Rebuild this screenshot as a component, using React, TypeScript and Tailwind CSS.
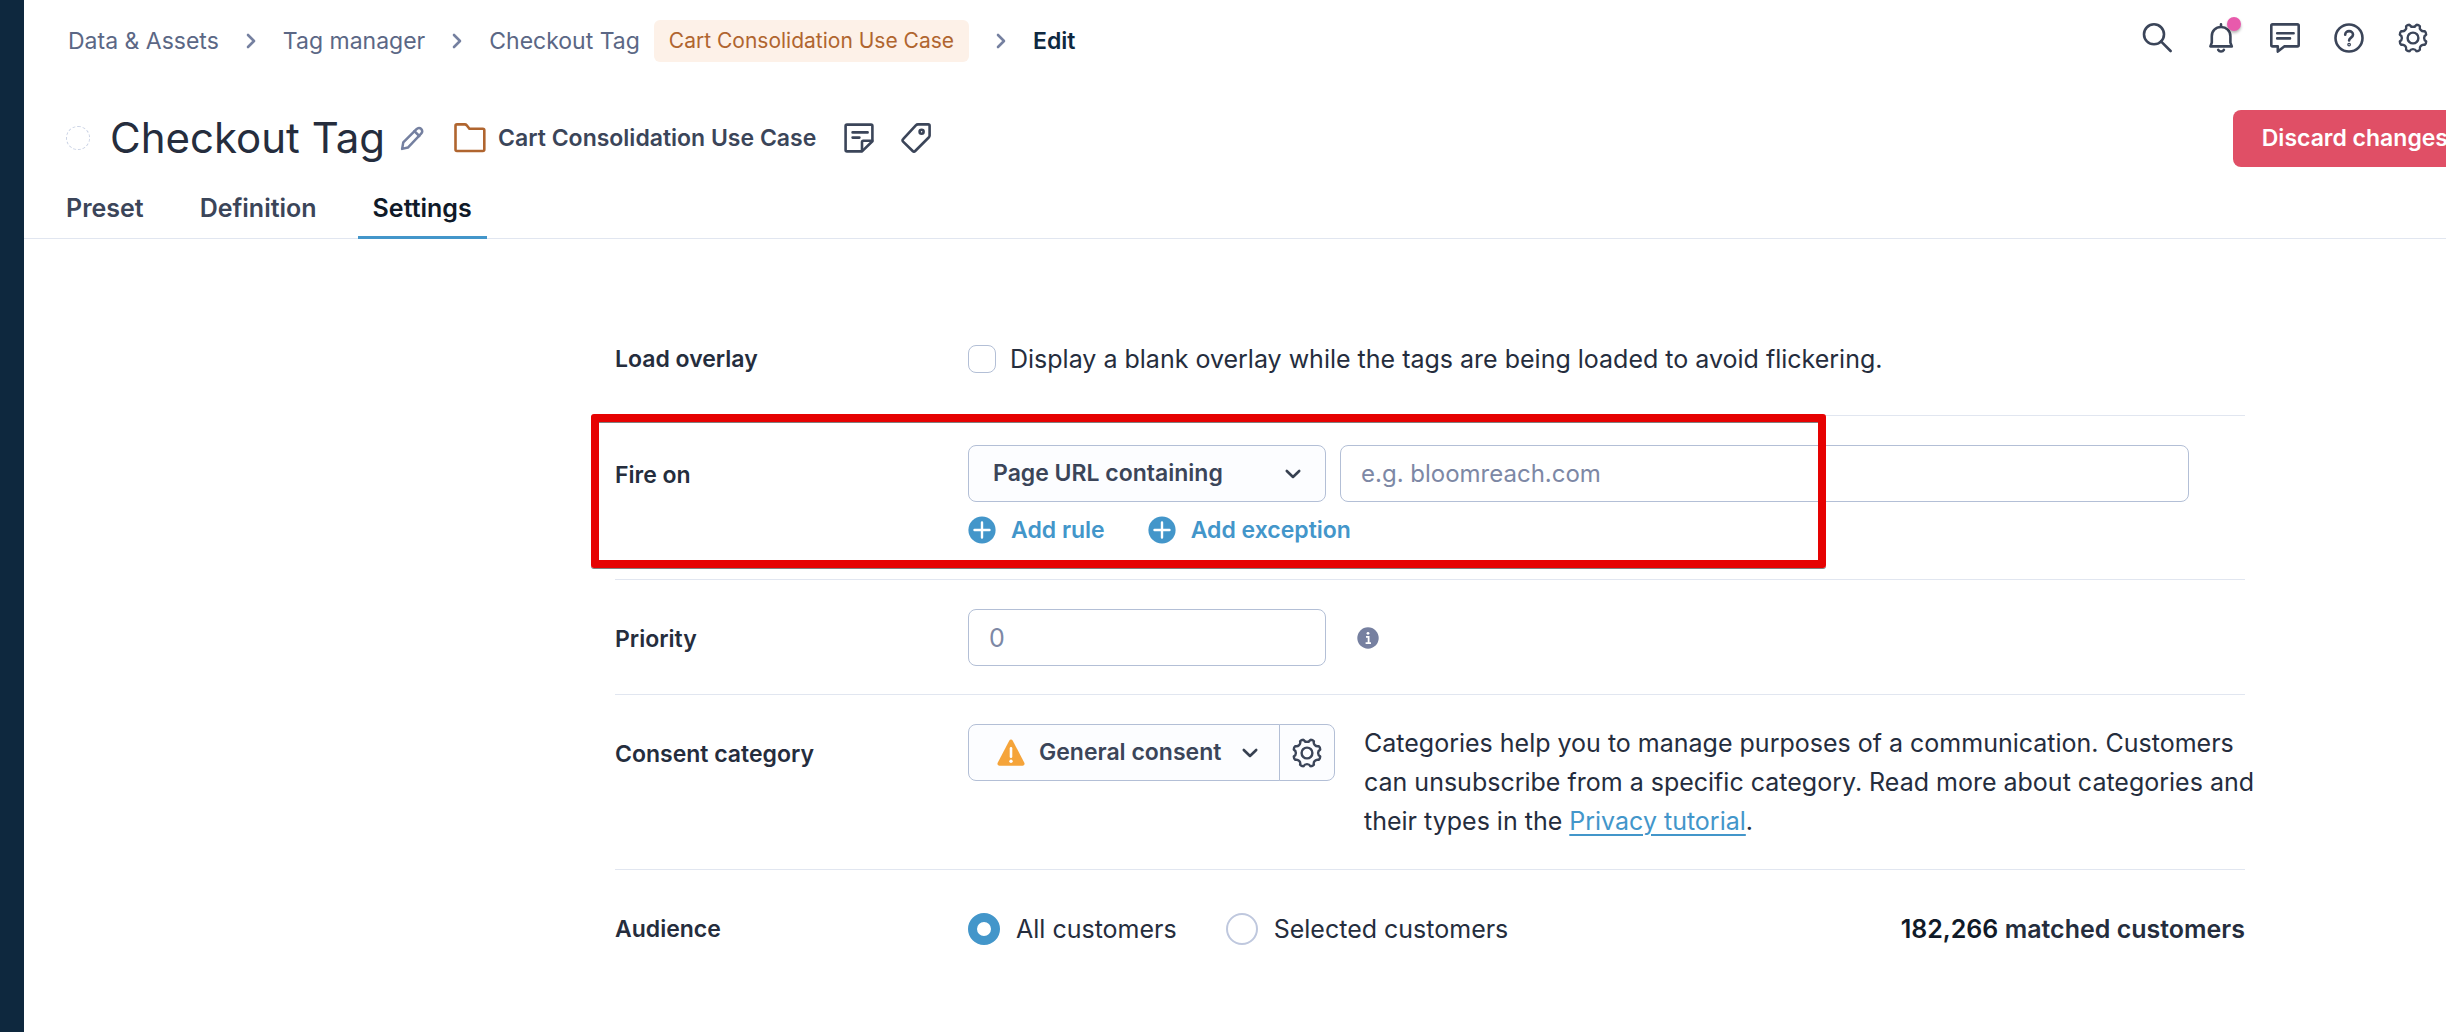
import { useState } from "react";
import type { ReactNode } from "react";

type IconProps = { className?: string };

function Svg({ children, className = "", viewBox = "0 0 30 30", stroke = 2.6 }: { children: ReactNode; className?: string; viewBox?: string; stroke?: number }) {
  return (
    <svg
      viewBox={viewBox}
      className={className}
      fill="none"
      stroke="currentColor"
      strokeWidth={stroke}
      strokeLinecap="round"
      strokeLinejoin="round"
      aria-hidden="true"
    >
      {children}
    </svg>
  );
}

const polar = (r: number, deg: number) => {
  const a = (deg * Math.PI) / 180;
  return `${(15 + r * Math.sin(a)).toFixed(2)} ${(15 - r * Math.cos(a)).toFixed(2)}`;
};

// Eight rounded teeth with a curved valley between each pair.
const gearPath =
  Array.from({ length: 8 }, (_, i) => {
    const a = 22.5 + i * 45;
    return `${i === 0 ? "M" : "L"}${polar(13.6, a - 8)} Q${polar(14.4, a)} ${polar(13.6, a + 8)} C${polar(10.6, a + 12)} ${polar(10.6, a + 33)} ${polar(13.6, a + 37)}`;
  }).join(" ") + "Z";

const GearIcon = ({ className }: IconProps) => (
  <Svg className={className} stroke={2.4}>
    <path d={gearPath} />
    <circle cx="15" cy="15" r="5.4" />
  </Svg>
);

const SearchIcon = ({ className }: IconProps) => (
  <Svg className={className}>
    <circle cx="12" cy="11.3" r="10" />
    <path d="M19 18.4 28.6 28" />
  </Svg>
);

const BellIcon = ({ className }: IconProps) => (
  <Svg className={className}>
    <path d="M15 1.4v2.4M4.4 23.4h21.4L24.4 19.6V13.2c0-5.4-4-9.2-9.4-9.2s-9.2 3.8-9.2 9.2v6.4z" />
    <path d="M12.2 26.8c.6 1.1 1.6 1.7 2.8 1.7s2.3-.6 2.9-1.7" />
  </Svg>
);

const CommentIcon = ({ className }: IconProps) => (
  <Svg className={className}>
    <path d="M2.6 1.4h24.8c.8 0 1.3.5 1.3 1.3v19.4c0 .8-.5 1.3-1.3 1.3H14.2L7.8 28.6v-5.2H2.6c-.8 0-1.3-.5-1.3-1.3V2.7c0-.8.5-1.3 1.3-1.3z" />
    <path d="M7.2 10.3h16.4M7.2 15.4h12.8" />
  </Svg>
);

const HelpIcon = ({ className }: IconProps) => (
  <Svg className={className}>
    <circle cx="15" cy="15" r="13.5" />
    <path d="M11.2 11.8c0-2.2 1.7-3.7 3.9-3.7s3.9 1.5 3.9 3.6c0 2.8-3.9 3-3.9 5.8" />
    <circle cx="15.1" cy="21.6" r="0.6" />
  </Svg>
);

const ChevronRight = () => (
  <Svg className="h-4 w-[10px] shrink-0 text-[#7580a0]" viewBox="0 0 10 16">
    <path d="M2 2 8 8 2 14" />
  </Svg>
);

const ChevronDown = ({ className = "" }: IconProps) => (
  <Svg className={`pointer-events-none size-[18px] text-[#374151] ${className}`} viewBox="0 0 18 18">
    <path d="M2.8 6 9 12 15.2 6" />
  </Svg>
);

const PencilIcon = ({ className }: IconProps) => (
  <Svg className={className} viewBox="0 0 26 26">
    <path d="M2.2 23.8 3.4 17 17.2 3.2c1.6-1.6 3.4-1.6 4.8-.2s1.6 3.4 0 5L8.2 22.4z" />
    <path d="M15 5.4l5 5" />
  </Svg>
);

const FolderIcon = ({ className }: IconProps) => (
  <Svg className={className} viewBox="0 0 32 32">
    <path d="M3 2.4h7.800c.8 0 1.400.3 1.900.9l2.700 3.500h13.400c.9 0 1.500.6 1.500 1.500v19.200c0 .9-.6 1.500-1.500 1.500H3c-.9 0-1.500-.6-1.500-1.500V3.900c0-.9.6-1.500 1.500-1.500z" />
  </Svg>
);

const NoteIcon = ({ className }: IconProps) => (
  <Svg className={className}>
    <path d="M3 1.6h24c.9 0 1.400.5 1.400 1.400v15.200L18 28.400H3c-.9 0-1.400-.5-1.400-1.400V3c0-.9.5-1.400 1.400-1.400z" />
    <path d="M18 28v-9c0-.8.4-1.200 1.200-1.200h9M8.600 9.400h15M8.600 14.600h6.800" />
  </Svg>
);

const TagIcon = ({ className }: IconProps) => (
  <Svg className={className}>
    <path d="M17 1.4h10.200c.9 0 1.400.5 1.400 1.400v9.600c0 .8-.3 1.500-.9 2.100L14.200 28c-.8.8-1.700.8-2.500 0l-9.600-9.400c-.8-.8-.8-1.700 0-2.500L14.800 2.300c.6-.6 1.300-.9 2.200-.9z" />
    <circle cx="20.6" cy="8.8" r="2" />
  </Svg>
);

const PlusCircle = () => (
  <svg viewBox="0 0 28 28" className="size-7" aria-hidden="true">
    <circle cx="14" cy="14" r="13.6" fill="#4396ca" />
    <path d="M14 6.5v15M6.5 14h15" stroke="#fff" strokeWidth="2.4" strokeLinecap="round" />
  </svg>
);

const InfoIcon = () => (
  <svg viewBox="0 0 22 22" className="size-[22px]" role="img" aria-label="Priority info">
    <circle cx="11" cy="11" r="10.7" fill="#7680a0" />
    <circle cx="11" cy="6.3" r="1.4" fill="#fff" />
    <path d="M9 9.8h2.6v6M8.6 16.2h5.4" stroke="#fff" strokeWidth="1.8" fill="none" />
  </svg>
);

const WarningIcon = ({ className }: IconProps) => (
  <svg viewBox="0 0 28 28" className={className} aria-hidden="true">
    <path d="M12.2 1.7c.8-1.5 2.800-1.500 3.600 0l11.500 22c.7 1.400 0 3-1.800 3h-23c-1.800 0-2.500-1.600-1.800-3z" fill="#f5a43a" />
    <path d="M14 9.4v8.4" stroke="#fff" strokeWidth="2.6" strokeLinecap="round" />
    <circle cx="14" cy="22.2" r="1.7" fill="#fff" />
  </svg>
);

function Breadcrumbs() {
  const link = "text-[23px] leading-[42px] text-[#5b6785]";
  return (
    <nav aria-label="Breadcrumb" className="flex items-center gap-[27px]">
      <a href="#assets" className={link}>Data &amp; Assets</a>
      <ChevronRight />
      <a href="#tags" className={link}>Tag manager</a>
      <ChevronRight />
      <span className="flex items-center gap-[14px]">
        <a href="#checkout" className={link}>Checkout Tag</a>
        <a href="#project" className="rounded-md bg-[#fdf1e8] px-[15px] text-[21px] leading-[42px] text-[#b0652f]">
          Cart Consolidation Use Case
        </a>
      </span>
      <ChevronRight />
      <span className="text-[23px] font-semibold leading-[42px] text-[#0e2840]" aria-current="page">Edit</span>
    </nav>
  );
}

function TopActions() {
  const items = [
    { label: "Search", Icon: SearchIcon },
    { label: "Notifications", Icon: BellIcon },
    { label: "Messages", Icon: CommentIcon },
    { label: "Help", Icon: HelpIcon },
    { label: "Settings", Icon: GearIcon },
  ];
  return (
    <div className="flex items-center gap-[34px] text-[#3b4559]">
      {items.map(({ label, Icon }) => (
        <button key={label} type="button" aria-label={label} className="relative">
          <Icon className="size-[30px]" />
          {label === "Notifications" && (
            <span className="absolute -top-[6px] left-[21px] size-[14px] rounded-full bg-[#e85aac] shadow-[0_2px_3px_rgba(0,0,0,0.3)]" />
          )}
        </button>
      ))}
    </div>
  );
}

function Row({ label, htmlFor, className, labelClass, children }: { label: string; htmlFor?: string; className: string; labelClass: string; children: ReactNode }) {
  const text = `text-[23px] font-semibold text-[#252d3d] ${labelClass}`;
  return (
    <div className={`grid grid-cols-[353px_1fr] items-start border-[#e1e6f0] ${className}`}>
      {htmlFor ? <label htmlFor={htmlFor} className={text}>{label}</label> : <span className={text}>{label}</span>}
      {children}
    </div>
  );
}

export default function App() {
  const [tab, setTab] = useState("Settings");
  const [overlay, setOverlay] = useState(false);
  const [audience, setAudience] = useState("all");
  const radio =
    "size-8 appearance-none rounded-full border-2 border-[#bfc8de] bg-white checked:border-[9px] checked:border-[#4396ca]";
  const field = "h-[57px] rounded-lg border border-[#b3bfd6]";

  return (
    <div className="flex min-h-screen overflow-hidden bg-white font-['Inter',sans-serif] text-[25px] text-[#252d3d]">
      <aside className="w-6 shrink-0 bg-[#0e283e]" />
      <div className="min-w-0 flex-1">
        <header className="flex items-start justify-between pl-11 pr-[18px] pt-5">
          <Breadcrumbs />
          <div className="pt-[3px]">
            <TopActions />
          </div>
        </header>

        <div className="flex items-center justify-between pb-px pl-[42px] pt-[46px]">
          <div className="flex h-[60px] items-center">
            <span className="size-6 rounded-full border border-dashed border-[#cbd3e5]" />
            <h1 className="ml-5 whitespace-nowrap text-[42px] leading-[60px]">Checkout Tag</h1>
            <button type="button" aria-label="Rename" className="ml-[15px] text-[#7580a0]">
              <PencilIcon className="size-[25px]" />
            </button>
            <button type="button" className="ml-[29px] flex items-center gap-3 text-[23px] font-semibold text-[#3b4559]">
              <FolderIcon className="size-8 text-[#b0652f]" />
              <span className="whitespace-nowrap">Cart Consolidation Use Case</span>
            </button>
            <button type="button" aria-label="Notes" className="ml-7 text-[#3b4559]">
              <NoteIcon className="size-[30px]" />
            </button>
            <button type="button" aria-label="Tags" className="ml-[27px] text-[#3b4559]">
              <TagIcon className="size-[30px]" />
            </button>
          </div>
          <button
            type="button"
            className="-mr-6 h-[57px] shrink-0 whitespace-nowrap rounded-l-lg bg-[#e04f66] pl-[29px] pr-[22px] text-[23px] font-semibold text-white"
          >
            Discard changes
          </button>
        </div>

        <div role="tablist" className="flex gap-[26px] border-b border-[#e1e6f0] pl-[27px]">
          {["Preset", "Definition", "Settings"].map((name) => (
            <button
              key={name}
              type="button"
              role="tab"
              aria-selected={tab === name}
              onClick={() => setTab(name)}
              className={`-mb-px h-[70px] border-b-3 px-[15px] pt-3 text-[25px] font-semibold ${
                tab === name ? "border-[#4396ca] text-[#101a28]" : "border-transparent text-[#3b4559]"
              }`}
            >
              {name}
            </button>
          ))}
        </div>

        <form className="ml-[591px] mr-[201px] pt-[63px]" onSubmit={(e) => e.preventDefault()}>
          <Row label="Load overlay" className="pb-9 pt-[37px]" labelClass="leading-10">
            <label className="flex items-center gap-[14px] leading-10">
              <input
                type="checkbox"
                checked={overlay}
                onChange={(e) => setOverlay(e.target.checked)}
                className="size-7 appearance-none rounded-lg border border-[#b3bfd6] bg-white checked:bg-[#4396ca]"
              />
              Display a blank overlay while the tags are being loaded to avoid flickering.
            </label>
          </Row>

          <div className="relative">
            <Row label="Fire on" htmlFor="rule" className="border-t pb-[29px] pt-[29px]" labelClass="leading-[60px]">
              <div>
                <div className="flex gap-[14px] pr-14">
                  <div className="relative shrink-0">
                    <select id="rule" className={`${field} w-[358px] appearance-none bg-[#fcfdff] pl-6 pr-12 text-[23px] font-semibold text-[#3b4559]`}>
                      <option>Page URL containing</option>
                    </select>
                    <ChevronDown className="absolute right-6 top-5" />
                  </div>
                  <input
                    type="text"
                    aria-label="Page URL"
                    placeholder="e.g. bloomreach.com"
                    className={`${field} min-w-0 flex-1 bg-white px-5 text-[24px] placeholder:text-[#7d88a5]`}
                  />
                </div>
                <div className="mt-2 flex gap-[43px] text-[23px] font-semibold text-[#4396ca]">
                  <button type="button" className="flex h-10 items-center gap-[15px]">
                    <PlusCircle />
                    Add rule
                  </button>
                  <button type="button" className="flex h-10 items-center gap-[15px]">
                    <PlusCircle />
                    Add exception
                  </button>
                </div>
              </div>
            </Row>
            <div className="pointer-events-none absolute -left-6 -top-px h-[154px] w-[1235px] rounded-[3px] border-8 border-[#e60202] shadow-[0_1px_0_#808080,inset_0_1px_0_#808080]" />
          </div>

          <Row label="Priority" htmlFor="priority" className="border-t pb-[25px] pt-[29px]" labelClass="leading-[60px]">
            <div className="flex items-center gap-[31px]">
              <input id="priority" type="text" placeholder="0" className={`${field} w-[358px] bg-white px-5 text-[25px] placeholder:text-[#7d88a5]`} />
              <InfoIcon />
            </div>
          </Row>

          <Row label="Consent category" htmlFor="consent" className="border-t pb-7 pt-[29px]" labelClass="leading-[60px]">
            <div className="flex items-start gap-[29px]">
              <div className="flex shrink-0">
                <div className="relative">
                  <select id="consent" className="h-[57px] w-[312px] appearance-none rounded-l-lg border border-[#b3bfd6] bg-[#fcfdff] pl-[70px] pr-12 text-[23px] font-semibold text-[#3b4559]">
                    <option>General consent</option>
                  </select>
                  <WarningIcon className="pointer-events-none absolute left-[29px] top-[15px] size-7" />
                  <ChevronDown className="absolute right-[21px] top-5" />
                </div>
                <button
                  type="button"
                  aria-label="Consent settings"
                  className="-ml-px grid h-[57px] w-14 place-items-center rounded-r-lg border border-[#b3bfd6] bg-[#fcfdff] text-[#3b4559]"
                >
                  <GearIcon className="size-[30px]" />
                </button>
              </div>
              <p className="-mr-4 leading-[39px]">
                Categories help you to manage purposes of a communication. Customers can unsubscribe from a specific
                category. Read more about categories and their types in the{" "}
                <a href="#privacy" className="text-[#4396ca] underline decoration-2 underline-offset-4">Privacy tutorial</a>.
              </p>
            </div>
          </Row>

          <Row label="Audience" className="border-t pb-10 pt-[39px]" labelClass="leading-10">
            <div className="flex items-center justify-between">
              <div role="radiogroup" aria-label="Audience" className="flex gap-[49px]">
                <label className="flex items-center gap-4 leading-10">
                  <input type="radio" name="audience" checked={audience === "all"} onChange={() => setAudience("all")} className={radio} />
                  All customers
                </label>
                <label className="flex items-center gap-4 leading-10">
                  <input type="radio" name="audience" checked={audience === "selected"} onChange={() => setAudience("selected")} className={radio} />
                  Selected customers
                </label>
              </div>
              <p className="font-semibold leading-10">
                <span className="text-[#101a28]">182,266</span> matched customers
              </p>
            </div>
          </Row>
        </form>
      </div>
    </div>
  );
}
